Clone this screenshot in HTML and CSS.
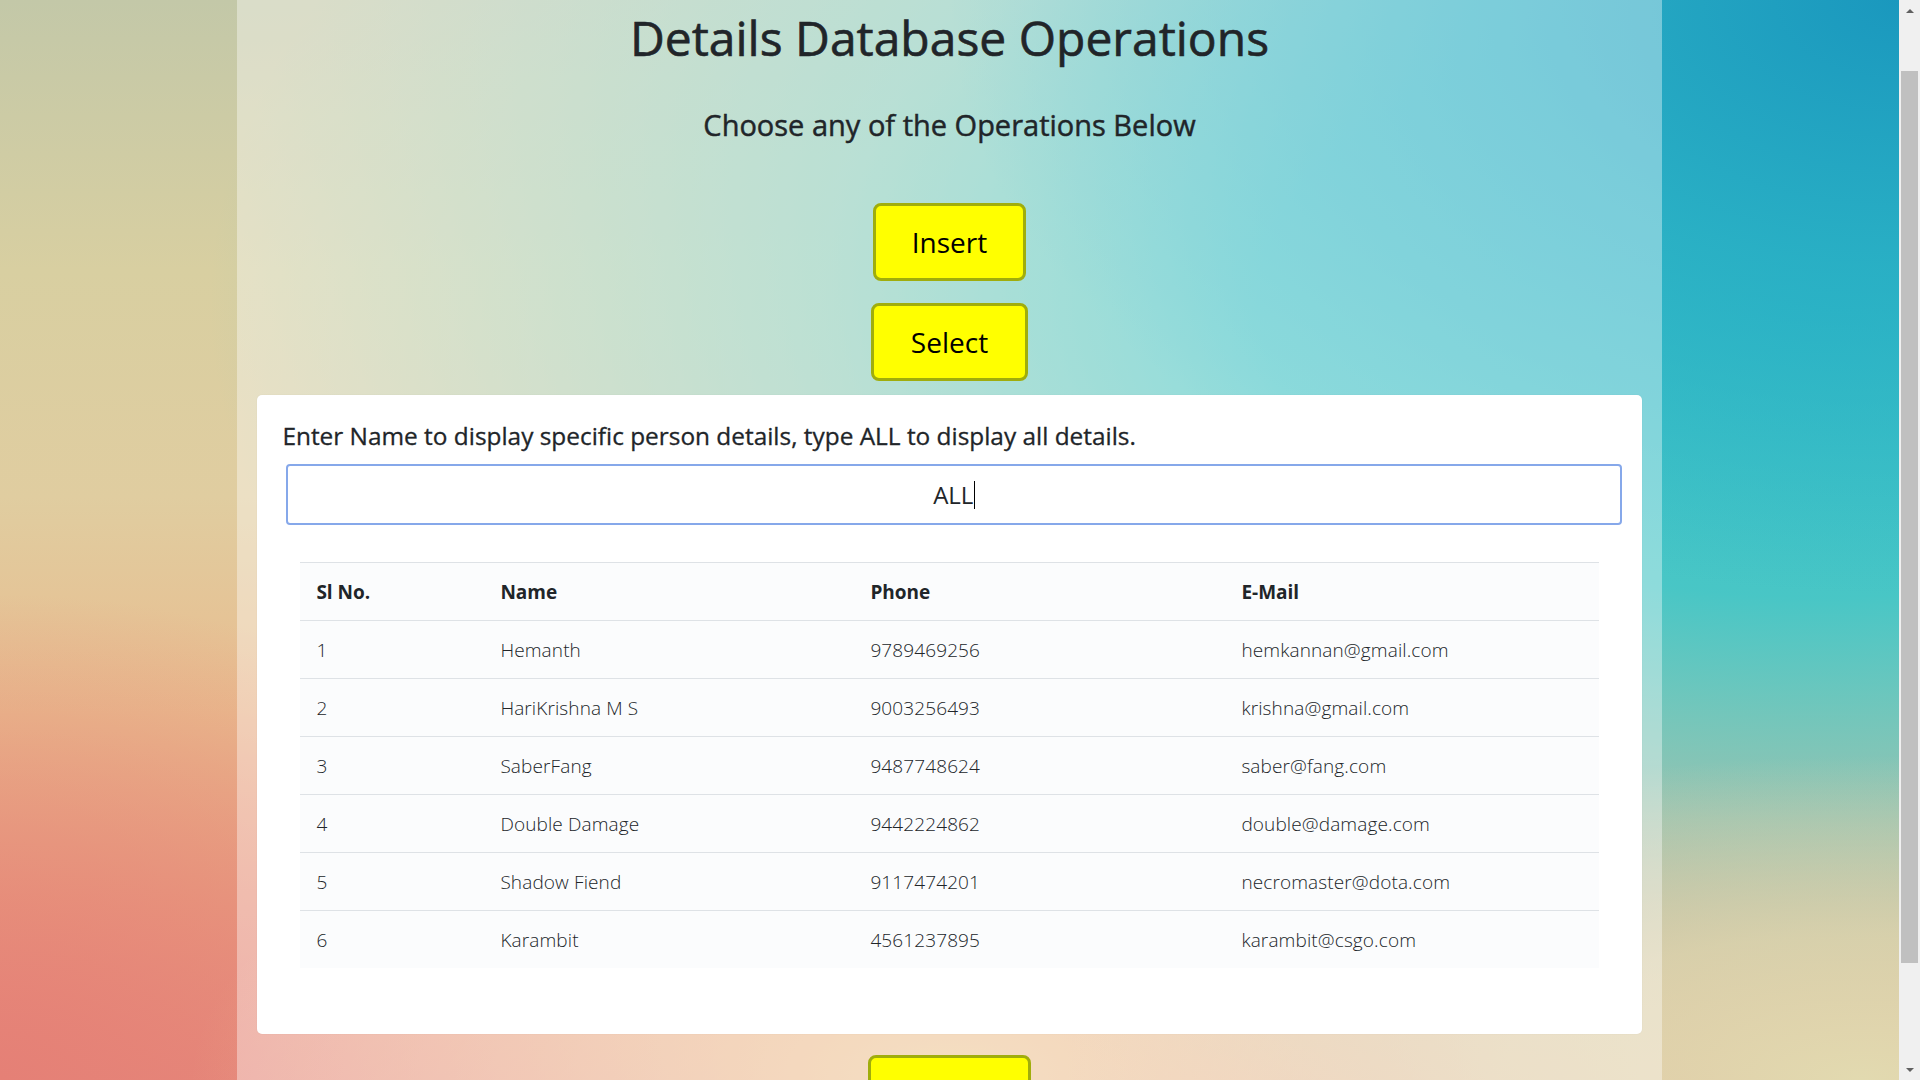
FILE: index.html
```html
<!DOCTYPE html>
<html lang="en">
<head>
<meta charset="utf-8">
<title>Details Database Operations</title>
<link rel="stylesheet" href="styles.css">
</head>
<body>
<div class="viewport">
  <main class="container">
    <h1 class="title">Details Database Operations</h1>
    <h3 class="subtitle">Choose any of the Operations Below</h3>
    <button class="op-btn btn-insert" type="button">Insert</button>
    <button class="op-btn btn-select" type="button">Select</button>
    <section class="card">
      <label class="prompt">Enter Name to display specific person details, type ALL to display all details.</label>
      <div class="search"><span class="search-value">ALL</span><span class="caret"></span></div>
      <table class="data">
        <colgroup>
          <col class="c-sl"><col class="c-name"><col class="c-phone"><col class="c-mail">
        </colgroup>
        <thead>
          <tr><th>Sl No.</th><th>Name</th><th>Phone</th><th>E-Mail</th></tr>
        </thead>
        <tbody>
          <tr><td>1</td><td>Hemanth</td><td>9789469256</td><td>hemkannan@gmail.com</td></tr>
          <tr><td>2</td><td>HariKrishna M S</td><td>9003256493</td><td>krishna@gmail.com</td></tr>
          <tr><td>3</td><td>SaberFang</td><td>9487748624</td><td>saber@fang.com</td></tr>
          <tr><td>4</td><td>Double Damage</td><td>9442224862</td><td>double@damage.com</td></tr>
          <tr><td>5</td><td>Shadow Fiend</td><td>9117474201</td><td>necromaster@dota.com</td></tr>
          <tr><td>6</td><td>Karambit</td><td>4561237895</td><td>karambit@csgo.com</td></tr>
        </tbody>
      </table>
    </section>
    <button class="op-btn btn-delete" type="button">Delete</button>
  </main>
</div>
<div class="scrollbar">
  <div class="sb-btn"><span class="arrow-up"></span></div>
  <div class="sb-track"><div class="sb-thumb"></div></div>
  <div class="sb-btn"><span class="arrow-down"></span></div>
</div>
</body>
</html>
```

FILE: styles.css
```css
html, body {
  margin: 0;
  padding: 0;
  height: 1080px;
  overflow: hidden;
}

body {
  display: flex;
  font-family: "Open Sans", "Noto Sans", sans-serif;
  color: #212529;
}

.viewport {
  flex: 1;
  height: 1080px;
  overflow: hidden;
  background:
    radial-gradient(ellipse 42% 30% at 98% 100%, rgba(226,218,176,1) 0%, rgba(226,218,176,0.75) 45%, rgba(226,218,176,0) 100%),
    radial-gradient(ellipse 40% 30% at 50% 100%, rgba(240,212,160,0.9) 0%, rgba(240,212,160,0) 100%),
    radial-gradient(ellipse 50% 55% at 100% 0%, rgba(26,152,190,1) 0%, rgba(38,172,196,0.85) 45%, rgba(56,192,200,0) 100%),
    radial-gradient(ellipse 85% 78% at 96% 28%, rgba(56,194,200,1) 0%, rgba(64,198,200,0.95) 35%, rgba(100,206,202,0.6) 62%, rgba(130,210,200,0) 100%),
    radial-gradient(ellipse 35% 45% at 0% 100%, rgba(229,128,118,1) 0%, rgba(229,128,118,0.5) 50%, rgba(229,128,118,0) 100%),
    linear-gradient(180deg, #c3c8a8 0%, #d8cfa1 25%, #e0cda0 46%, #e9bc8e 66%, #e9a382 84%, #e68e7e 100%);
}

.container {
  width: 75%;
  height: 1080px;
  margin: 0 auto;
  background: rgba(255, 255, 255, 0.38);
  display: flex;
  flex-direction: column;
  align-items: center;
}

.title {
  margin: 0;
  padding-top: 9px;
  font-size: 48px;
  line-height: 58px;
  font-weight: 400;
  -webkit-text-stroke: 0.6px #212529;
  text-align: center;
}

.subtitle {
  margin: 41px 0 0;
  font-size: 29px;
  line-height: 34px;
  font-weight: 400;
  -webkit-text-stroke: 0.45px #212529;
  text-align: center;
}

.op-btn {
  flex: none;
  font-family: "Open Sans", "Noto Sans", sans-serif;
  font-size: 28px;
  line-height: 38px;
  padding: 17px 36px;
  color: #000;
  background: #ffff00;
  border: 3px solid #a0ad0c;
  border-radius: 8px;
}

.btn-insert { margin-top: 61px; }
.btn-select { margin-top: 22px; padding: 17px 37px; }
.btn-delete { margin-top: 21px; }

.card {
  flex: none;
  align-self: stretch;
  margin: 14px 19.5px 0;
  padding: 26px 0 66px;
  background: #ffffff;
  border-radius: 5px;
  box-shadow: 0 0 2px rgba(0, 0, 0, 0.06);
}

.prompt {
  display: block;
  margin-left: 25.5px;
  font-size: 24.4px;
  line-height: 29px;
  -webkit-text-stroke: 0.3px #212529;
}

.search {
  box-sizing: border-box;
  height: 61px;
  margin: 14px 20px 0 29.5px;
  border: 2px solid #86a8ea;
  border-radius: 4px;
  display: flex;
  align-items: center;
  justify-content: center;
  font-size: 24px;
  color: #212529;
}

.search-value { line-height: 30px; }

.caret {
  display: inline-block;
  width: 1px;
  height: 28px;
  background: #000;
  margin-left: 1px;
}

.data {
  width: calc(100% - 87px);
  margin: 37px 43.5px 0;
  border-collapse: separate;
  border-spacing: 0;
  background: #fbfcfd;
  font-size: 19px;
}

.c-sl { width: 184px; }
.c-name { width: 370px; }
.c-phone { width: 371px; }

.data th,
.data td {
  box-sizing: border-box;
  height: 58px;
  padding: 0 16px;
  border-top: 1px solid #dee2e6;
  text-align: left;
  vertical-align: middle;
  color: #212529;
}

.data th { font-weight: 700; }
.data td { font-weight: 300; letter-spacing: 0.12px; }

.scrollbar {
  flex: none;
  width: 21px;
  height: 1080px;
  background: #f0f0f0;
  display: flex;
  flex-direction: column;
}

.sb-btn {
  height: 21px;
  display: flex;
  align-items: center;
  justify-content: center;
}

.arrow-up {
  width: 0;
  height: 0;
  border-left: 4px solid transparent;
  border-right: 4px solid transparent;
  border-bottom: 4px solid #606060;
}

.arrow-down {
  width: 0;
  height: 0;
  border-left: 4px solid transparent;
  border-right: 4px solid transparent;
  border-top: 4px solid #606060;
}

.sb-track {
  flex: 1;
  padding-top: 50px;
}

.sb-thumb {
  height: 892px;
  margin: 0 2px;
  background: #c0c0c0;
}
```
